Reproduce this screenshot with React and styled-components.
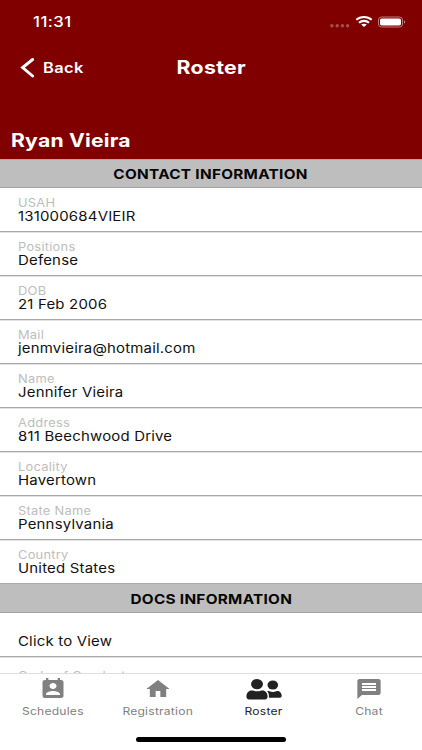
import styled, { createGlobalStyle } from "styled-components";
import { MdHome, MdMessage, MdPermContactCalendar } from "react-icons/md";

const GlobalStyle = createGlobalStyle`
  * {
    box-sizing: border-box;
  }

  body {
    margin: 0;
    background: #fff;
    font-family: Inter, "Liberation Sans", sans-serif;
  }
`;

const Screen = styled.div`
  display: flex;
  flex-direction: column;
  width: 422px;
  height: 750px;
  overflow: hidden;
  background: #fff;
`;

const Header = styled.header`
  flex: none;
  height: 159px;
  color: #fff;
  background: #800000;
`;

/* wide type used all over the app */
const Wide = styled.span`
  display: inline-block;
  white-space: nowrap;
  transform: scaleX(1.15);
  transform-origin: ${(p) => p.$origin || "left"} center;
`;

const StatusBar = styled.div`
  display: flex;
  align-items: center;
  justify-content: space-between;
  height: 43px;
  padding: 0 16px 0 33px;
`;

const Clock = styled.div`
  font-size: 14.5px;
  font-weight: 500;
  letter-spacing: 0.4px;
  line-height: 20px;
`;

const StatusIcons = styled.svg`
  display: block;
  width: 78px;
  height: 14px;
`;

const NavBar = styled.div`
  display: grid;
  grid-template-columns: 1fr auto 1fr;
  align-items: center;
  height: 49px;
  padding: 0 20px;
`;

const BackButton = styled.a`
  display: flex;
  align-items: center;
  gap: 8px;
  font-size: 14.3px;
  font-weight: 600;
  letter-spacing: 0.3px;

  svg {
    width: 15px;
    height: 20px;
  }
`;

const Title = styled.h1`
  margin: 0;
  padding-bottom: 2px;
  font-size: 18.5px;
  font-weight: 650;
  letter-spacing: 0.3px;
  line-height: 24px;
`;

const PlayerName = styled.h2`
  margin: 35px 0 0 11px;
  font-size: 18.4px;
  font-weight: 650;
  letter-spacing: 0.2px;
  line-height: 27px;
`;

const Content = styled.main`
  flex: 1;
  min-height: 0;
  overflow: hidden;
`;

const SectionTitle = styled.h3`
  height: ${(p) => p.$height}px;
  margin: 0;
  border-top: 1px solid #aaa;
  border-bottom: 1px solid #a3a3a3;
  background: #bebebe;
  color: #050505;
  font-size: 13.3px;
  font-weight: 650;
  letter-spacing: 0.27px;
  line-height: ${(p) => p.$height}px;
  text-align: center;
`;

const Row = styled.div`
  height: ${(p) => (p.$last ? 43 : 44)}px;
  padding: 8px 18px 0;
  border-bottom: ${(p) => (p.$last ? 0 : 1)}px solid #a9a9a9;
  box-shadow: ${(p) => (p.$last ? "none" : "0 1px 0 #e2e2e2")};
`;

const DocRow = styled(Row)`
  padding-top: ${(p) => (p.$empty ? 12 : 8)}px;
`;

const Label = styled.div`
  height: 14px;
  color: #bdbdbd;
  font-size: 11.2px;
  letter-spacing: 0.22px;
  line-height: 14px;
`;

const Value = styled.div`
  color: #111;
  font-size: 13px;
  letter-spacing: 0.17px;
  line-height: 13px;
`;

const TabBar = styled.nav`
  display: grid;
  grid-template-columns: 105px 106px 105px 106px;
  flex: none;
  height: 59px;
  border-top: 1px solid #dedede;
  background: #fff;
`;

const Tab = styled.a`
  display: flex;
  flex-direction: column;
  align-items: center;
  padding-top: 3px;
  color: ${(p) => (p.$active ? "#222" : "#808080")};
  font-size: 10.5px;
  letter-spacing: 0.2px;
  line-height: 15px;

  svg {
    display: block;
    width: ${(p) => p.$icon || 28}px;
    height: 24px;
    margin-bottom: 3px;
  }
`;

const HomeIndicator = styled.div`
  flex: none;
  height: 18px;
  padding-top: 5px;

  &::after {
    content: "";
    display: block;
    width: 150px;
    height: 5px;
    margin: 0 auto;
    border-radius: 3px;
    background: #000;
  }
`;

const contact = [
  { label: "USAH", value: "131000684VIEIR" },
  { label: "Positions", value: "Defense" },
  { label: "DOB", value: "21 Feb 2006" },
  { label: "Mail", value: "jenmvieira@hotmail.com" },
  { label: "Name", value: "Jennifer Vieira" },
  { label: "Address", value: "811 Beechwood Drive" },
  { label: "Locality", value: "Havertown" },
  { label: "State Name", value: "Pennsylvania" },
  { label: "Country", value: "United States" },
];

const docs = [
  { label: "", value: "Click to View" },
  { label: "Code of Conduct", value: "" },
];

function People() {
  return (
    <svg viewBox="0 0 36 24" fill="currentColor">
      <ellipse cx="11" cy="7.100" rx="6" ry="5.200" />
      <path d="M.4 19.600c0-3.600 2.400-6.100 5-6.100 2 0 3 .8 5.600.8s3.600-.8 5.600-.8c2.800 0 5 2.500 5 6.100 0 1.900-1 2.800-2.600 2.800H3C1.400 22.400.4 21.500.4 19.600z" />
      <ellipse cx="26.800" cy="8" rx="5.300" ry="4.500" />
      <path d="M21.200 14.300c.8-.4 1.500-.3 2.300 0 2.200.8 4.500.8 6.700 0 3-1 5.500 1.700 5.500 4.500 0 1.200-.7 1.900-1.800 1.900H23c.1-2.700-.3-4.800-1.800-6.400z" />
    </svg>
  );
}

function Field({ label, value, last, row: Component = Row }) {
  return (
    <Component $last={last} $empty={!value}>
      <Label>
        <Wide>{label}</Wide>
      </Label>
      <Value>
        <Wide>{value}</Wide>
      </Value>
    </Component>
  );
}

export default function App() {
  return (
    <>
      <GlobalStyle />
      <Screen>
        <Header>
          <StatusBar>
            <Clock>
              <Wide>11:31</Wide>
            </Clock>
            <StatusIcons viewBox="0 0 78 14" fill="none">
              <g fill="#a94e4e">
                <circle cx="3.900" cy="10.700" r="1.700" />
                <circle cx="9.200" cy="10.700" r="1.700" />
                <circle cx="14.400" cy="10.700" r="1.700" />
                <circle cx="19.600" cy="10.700" r="1.700" />
              </g>
              <g stroke="#fff" strokeWidth="2.100">
                <path d="M28.300 4.800c4.200-3.700 11.200-3.700 15.400 0" />
                <path d="M31 7.700c2.800-2.400 7.200-2.400 10 0" />
              </g>
              <path d="M33.200 9.600c1.600-1.300 4-1.300 5.600 0L36 12z" fill="#fff" />
              <rect x="50.500" y="2" width="24" height="10" rx="3" stroke="#c07c7c" />
              <rect x="52" y="3.500" width="21" height="7" rx="1.800" fill="#fff" />
              <path d="M76 5.500c1.500.4 1.500 2.600 0 3z" fill="#c98b8b" />
            </StatusIcons>
          </StatusBar>
          <NavBar>
            <BackButton>
              <svg viewBox="0 0 15 20" fill="none" stroke="#fff" strokeWidth="2.900">
                <path d="M12.600 1.500 2.600 9.600l10 8.400" strokeLinecap="round" />
              </svg>
              <Wide>Back</Wide>
            </BackButton>
            <Title>
              <Wide $origin="center">Roster</Wide>
            </Title>
          </NavBar>
          <PlayerName>
            <Wide>Ryan Vieira</Wide>
          </PlayerName>
        </Header>
        <Content>
          <SectionTitle $height={29}>
            <Wide $origin="center">CONTACT INFORMATION</Wide>
          </SectionTitle>
          {contact.map((item, i) => (
            <Field key={item.label} {...item} last={i === contact.length - 1} />
          ))}
          <SectionTitle $height={30}>
            <Wide $origin="center">DOCS INFORMATION</Wide>
          </SectionTitle>
          {docs.map((item) => (
            <Field key={item.label} {...item} row={DocRow} />
          ))}
        </Content>
        <TabBar>
          <Tab>
            <MdPermContactCalendar preserveAspectRatio="none" />
            <Wide $origin="center">Schedules</Wide>
          </Tab>
          <Tab>
            <MdHome preserveAspectRatio="none" />
            <Wide $origin="center">Registration</Wide>
          </Tab>
          <Tab $active $icon={36}>
            <People />
            <Wide $origin="center">Roster</Wide>
          </Tab>
          <Tab>
            <MdMessage preserveAspectRatio="none" />
            <Wide $origin="center">Chat</Wide>
          </Tab>
        </TabBar>
        <HomeIndicator />
      </Screen>
    </>
  );
}
